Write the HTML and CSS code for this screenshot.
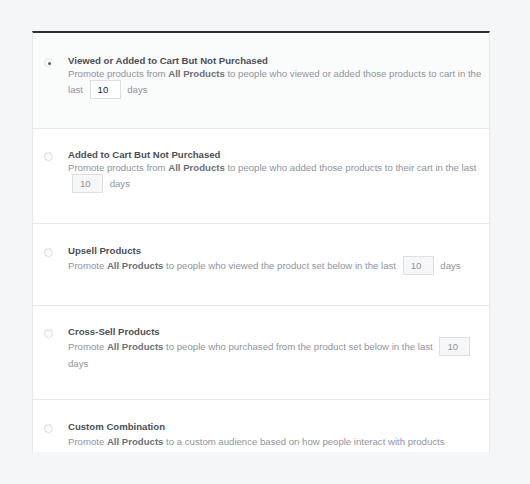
FILE: index.html
```html
<!DOCTYPE html>
<html>
<head>
<meta charset="utf-8">
<link rel="stylesheet" href="styles.css">
</head>
<body>
<div class="card">
  <div class="row selected r1">
    <span class="radio checked"></span>
    <div class="content">
      <div class="title tight">Viewed or Added to Cart But Not Purchased</div>
      <div class="desc">Promote products from <b>All Products</b> to people who viewed or added those products to cart in the last <span class="num active">10</span> days</div>
    </div>
  </div>
  <div class="row r2">
    <span class="radio"></span>
    <div class="content">
      <div class="title tight">Added to Cart But Not Purchased</div>
      <div class="desc">Promote products from <b>All Products</b> to people who added those products to their cart in the last <span class="num">10</span> days</div>
    </div>
  </div>
  <div class="row r3">
    <span class="radio"></span>
    <div class="content">
      <div class="title">Upsell Products</div>
      <div class="desc">Promote <b>All Products</b> to people who viewed the product set below in the last <span class="num">10</span> days</div>
    </div>
  </div>
  <div class="row r4">
    <span class="radio"></span>
    <div class="content">
      <div class="title">Cross-Sell Products</div>
      <div class="desc">Promote <b>All Products</b> to people who purchased from the product set below in the last <span class="num">10</span> days</div>
    </div>
  </div>
  <div class="row r5">
    <span class="radio"></span>
    <div class="content">
      <div class="title">Custom Combination</div>
      <div class="desc">Promote <b>All Products</b> to a custom audience based on how people interact with products</div>
    </div>
  </div>
</div>
</body>
</html>
```
FILE: styles.css
```css
html, body {
  margin: 0;
  padding: 0;
  background: #f5f6f8;
}
body {
  font-family: "Liberation Sans", Arial, Helvetica, sans-serif;
  -webkit-font-smoothing: antialiased;
}
.card {
  margin: 31px 0 0 32px;
  width: 456px;
  height: 419px;
  overflow: hidden;
  background: #ffffff;
  border-top: 2px solid #2b2e33;
  border-left: 1px solid #e6e8eb;
  border-right: 1px solid #e6e8eb;
}
.row {
  display: flex;
  align-items: flex-start;
  gap: 15px;
  padding: 22px 3px 0 11px;
  border-bottom: 1px solid #e6e8eb;
  box-sizing: border-box;
}
.row.selected {
  background: #fafbfb;
}
.r1 { height: 96px; padding-top: 22px; }
.r2 { height: 95px; padding-top: 20px; }
.r3 { height: 82px; padding-top: 21px; }
.r4 { height: 94px; padding-top: 20px; }
.r5 { height: 60px; padding-top: 21px; border-bottom: none; }
.radio {
  flex: none;
  width: 9px;
  height: 9px;
  margin-top: 3px;
  border-radius: 50%;
  box-sizing: border-box;
  border: 1px solid #d9dce0;
  background: linear-gradient(#f4f5f6, #ffffff);
  position: relative;
}
.radio.checked {
  border-color: #e4e6e9;
  background: #fbfbfc;
}
.radio.checked::after {
  content: "";
  position: absolute;
  left: 2.5px;
  top: 2.5px;
  width: 3px;
  height: 3px;
  border-radius: 50%;
  background: #5a5e66;
}
.content {
  flex: 1;
  min-width: 0;
}
.title {
  font-size: 9.6px;
  font-weight: bold;
  color: #4b4f56;
  line-height: 12px;
  margin-bottom: 1px;
}
.title.tight {
  margin-bottom: -1.5px;
}
.desc {
  font-size: 9.6px;
  color: #90949c;
  line-height: 16.5px;
}
.desc b {
  color: #6d7179;
  font-weight: bold;
}
.num {
  display: inline-block;
  vertical-align: middle;
  box-sizing: border-box;
  width: 31px;
  height: 19px;
  margin: -3px 4px -2px 4px;
  padding-left: 7px;
  line-height: 17px;
  font-size: 9.6px;
  color: #90949c;
  background: #f6f7f9;
  border: 1px solid #dddfe2;
}
.num.active {
  background: #ffffff;
  color: #1d2129;
}
```
